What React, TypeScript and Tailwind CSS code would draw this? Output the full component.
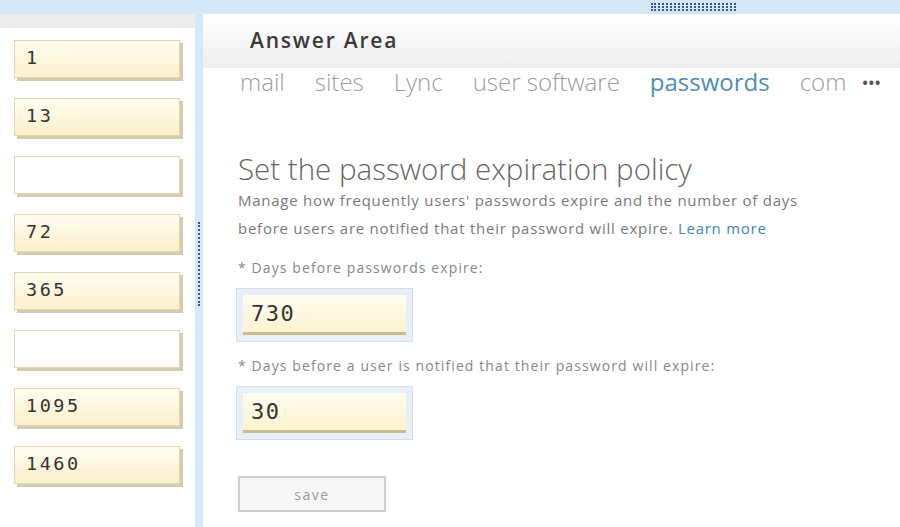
import React from "react";

const tiles = ["1", "13", "", "72", "365", "", "1095", "1460"];
const tabs = ["mail", "sites", "Lync", "user software", "passwords", "com"];

function Tile({ value }: { value: string }) {
  return (
    <div
      className={
        "w-[166px] h-[38px] border border-[#e2d6ac] shadow-[3px_3px_0_#d4ccb0] pl-[11px] text-[18.5px] tracking-[2.5px] leading-[34px] text-[#333] font-['DejaVu_Sans_Mono',monospace] " +
        (value ? "bg-gradient-to-b from-[#fffdf0] to-[#fcf0cc]" : "bg-white")
      }
    >
      {value}
    </div>
  );
}

function NumberBox({ value }: { value: string }) {
  return (
    <div className="w-[177px] p-[6px] bg-[#e9eff7] border border-[#d3deea]">
      <div className="h-[40px] bg-gradient-to-b from-[#fffdf0] to-[#fdf2cf] border-b-[3px] border-[#cbbd8c] pl-[8px] text-[22px] tracking-[1.5px] leading-[38px] text-[#333] font-['DejaVu_Sans_Mono',monospace]">
        {value}
      </div>
    </div>
  );
}

export default function App() {
  return (
    <div className="w-[900px] h-[527px] bg-white flex flex-col overflow-hidden font-['Open_Sans',sans-serif]">
      {/* top bar with grip */}
      <div className="h-[14px] bg-[#d4e8f8] pl-[651px] pt-[3px] shrink-0 flex flex-col gap-[1px]">
        <div className="w-[85px] border-t-2 border-dotted border-[#37598f]" />
        <div className="w-[85px] border-t-2 border-dotted border-[#37598f]" />
        <div className="w-[85px] border-t-2 border-dotted border-[#37598f]" />
      </div>

      <div className="flex flex-1">
        {/* answer choices */}
        <div className="w-[195px] flex flex-col">
          <div className="h-[14px] bg-[#ececec]" />
          <div className="flex flex-col gap-[20px] pl-[14px] pt-[12px]">
            {tiles.map((t, i) => (
              <Tile key={i} value={t} />
            ))}
          </div>
        </div>

        {/* splitter */}
        <div className="w-[8px] bg-[#d4e8f8] flex justify-center pt-[208px]">
          <div className="w-[3px] h-[84px] border-l-2 border-dotted border-[#37598f]" />
        </div>

        {/* answer area */}
        <div className="flex-1 flex flex-col">
          <div className="h-[54px] bg-gradient-to-b from-white to-[#eeeeee] flex items-center pl-[47px] text-[21px] font-semibold tracking-[1.8px] text-[#3a3a3a]">
            Answer Area
          </div>
          <div className="h-[28px] flex items-center gap-[30px] pl-[37px] text-[24px] font-light text-[#9d9d9d] whitespace-nowrap">
            {tabs.map((t) => (
              <span
                key={t}
                className={t === "passwords" ? "text-[#4e8db7] font-normal" : ""}
              >
                {t}
              </span>
            ))}
            <span className="-ml-[14px] text-[14px] font-bold text-[#555] tracking-[1px]">
              •••
            </span>
          </div>

          <div className="pl-[35px] flex flex-col">
            <h1 className="mt-[56px] text-[29.5px] leading-[34px] font-light text-[#666]">
              Set the password expiration policy
            </h1>
            <p className="text-[15px] tracking-[0.75px] leading-[28px] text-[#7a7a7a]">
              Manage how frequently users' passwords expire and the number of days
              <br />
              before users are notified that their password will expire.{" "}
              <span className="text-[#3f86b8]">Learn more</span>
            </p>

            <div className="mt-[16px] text-[14px] tracking-[1.1px] leading-[20px] text-[#888]">
              * Days before passwords expire:
            </div>
            <div className="mt-[10px] -ml-[2px]">
              <NumberBox value="730" />
            </div>

            <div className="mt-[14px] text-[14px] tracking-[1.1px] leading-[20px] text-[#888]">
              * Days before a user is notified that their password will expire:
            </div>
            <div className="mt-[10px] -ml-[2px]">
              <NumberBox value="30" />
            </div>

            <button className="mt-[36px] w-[148px] h-[36px] border-2 border-[#cfcfcf] bg-[#f7f7f7] text-[14px] tracking-[1.5px] text-[#9a9a9a]">
              save
            </button>
          </div>
        </div>
      </div>
    </div>
  );
}
